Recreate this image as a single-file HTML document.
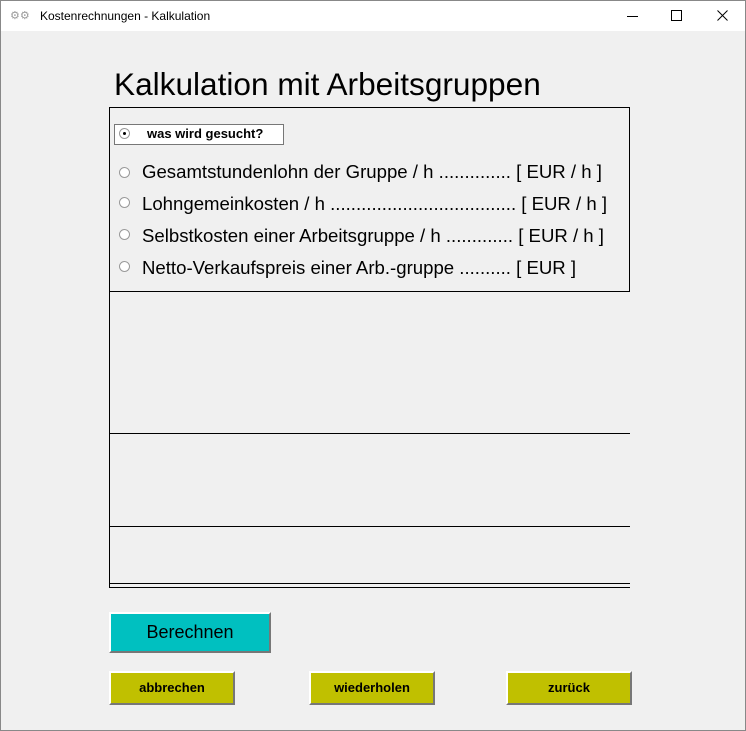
<!DOCTYPE html>
<html><head><style>
body{margin:0;width:746px;height:731px;overflow:hidden;font-family:"Liberation Sans",Arial,sans-serif;}
.win{position:absolute;left:0;top:0;width:744px;height:729px;border:1px solid #888;background:#f0f0f0;}
.tb{position:absolute;left:0;top:0;width:744px;height:30px;background:#fff;font-size:12px;}
.a{position:absolute;}
.ln{position:absolute;background:#000;}
.rad{position:absolute;width:9px;height:9px;border-radius:50%;border:1px solid #999;background:#fff;}
.t{position:absolute;font-size:18.6px;white-space:nowrap;}
.btn{position:absolute;border-top:2px solid #fff;border-left:2px solid #fff;border-right:2px solid #777;border-bottom:2px solid #777;box-sizing:border-box;text-align:center;font-weight:bold;font-size:13px;}
</style></head><body>
<div class="win">
<div class="tb">
<span class="a" style="left:9px;top:8px;color:#999;font-size:11px">⚙⚙</span>
<span class="a" style="left:39px;top:8px">Kostenrechnungen - Kalkulation</span>
<div class="a" style="left:626px;top:15px;width:11px;height:1px;background:#000"></div>
<div class="a" style="left:670px;top:9px;width:9px;height:9px;border:1px solid #000"></div>
<svg class="a" style="left:716px;top:9px" width="11" height="11"><path d="M0.5 0.5L10.5 10.5M10.5 0.5L0.5 10.5" stroke="#000" stroke-width="1"/></svg>
</div>
<div class="a" style="left:113px;top:65px;font-size:31.6px">Kalkulation mit Arbeitsgruppen</div>
<div class="ln" style="left:108px;top:106px;width:521px;height:1px"></div>
<div class="ln" style="left:628px;top:106px;width:1px;height:185px"></div>
<div class="ln" style="left:108px;top:106px;width:1px;height:480px"></div>
<div class="ln" style="left:108px;top:290px;width:521px;height:1px"></div>
<div class="ln" style="left:108px;top:432px;width:521px;height:1px"></div>
<div class="ln" style="left:108px;top:525px;width:521px;height:1px"></div>
<div class="ln" style="left:108px;top:582px;width:521px;height:1px"></div>
<div class="ln" style="left:108px;top:586px;width:521px;height:1px"></div>
<div class="a" style="left:113px;top:123px;width:168px;height:19px;border:1px solid #777;background:#fff;"></div>
<div class="rad" style="left:118px;top:127px;background:#fff"><div style="position:absolute;left:3px;top:3px;width:3px;height:3px;background:#000;border-radius:50%"></div></div>
<div class="a" style="left:146px;top:125px;font-size:13px;font-weight:bold">was wird gesucht?</div>
<div class="rad" style="left:118px;top:166px"></div>
<div class="t" style="left:141px;top:160px">Gesamtstundenlohn der Gruppe / h .............. [ EUR / h ]</div>
<div class="rad" style="left:118px;top:196px"></div>
<div class="t" style="left:141px;top:192px">Lohngemeinkosten / h .................................... [ EUR / h ]</div>
<div class="rad" style="left:118px;top:228px"></div>
<div class="t" style="left:141px;top:224px">Selbstkosten einer Arbeitsgruppe / h ............. [ EUR / h ]</div>
<div class="rad" style="left:118px;top:260px"></div>
<div class="t" style="left:141px;top:256px">Netto-Verkaufspreis einer Arb.-gruppe .......... [ EUR ]</div>
<div class="btn" style="left:108px;top:611px;width:162px;height:41px;background:#00c0c0;font-weight:normal;font-size:18px;line-height:37px">Berechnen</div>
<div class="btn" style="left:108px;top:670px;width:126px;height:34px;background:#c0c000;line-height:30px">abbrechen</div>
<div class="btn" style="left:308px;top:670px;width:126px;height:34px;background:#c0c000;line-height:30px">wiederholen</div>
<div class="btn" style="left:505px;top:670px;width:126px;height:34px;background:#c0c000;line-height:30px">zurück</div>
</div>
</body></html>
